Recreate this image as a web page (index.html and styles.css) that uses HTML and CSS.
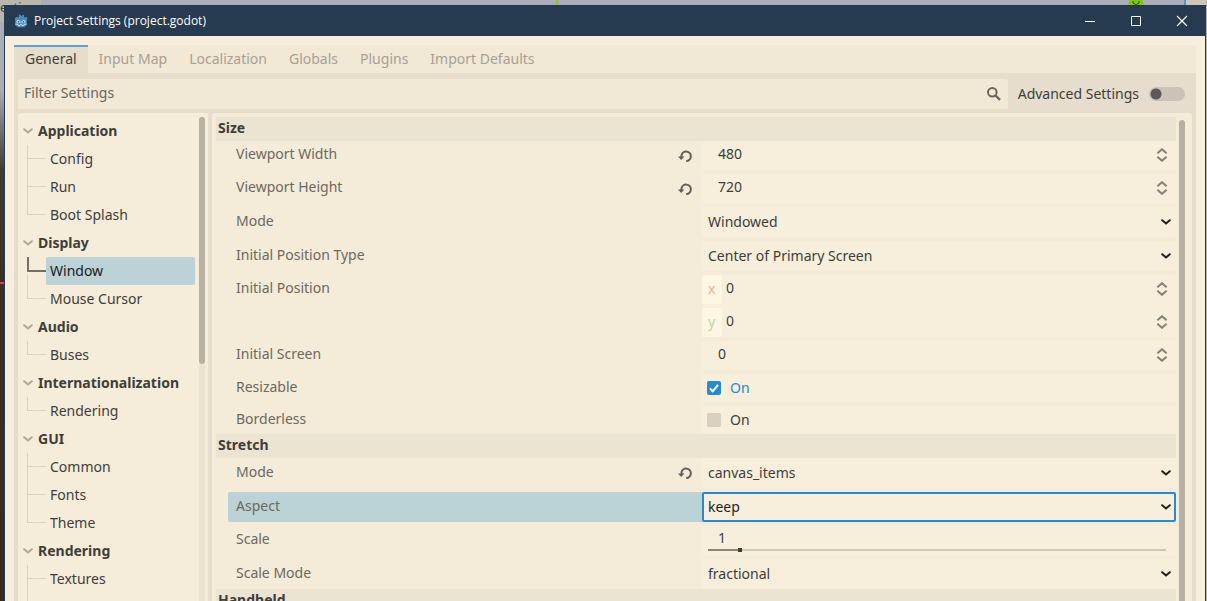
FILE: index.html
```html
<!DOCTYPE html>
<html lang="en">
<head>
<meta charset="utf-8">
<title>Project Settings (project.godot)</title>
<link rel="stylesheet" href="styles.css">
</head>
<body>
<svg class="defs" aria-hidden="true">
  <symbol id="i-down" viewBox="0 0 10 6"><path d="M1.200 1.200L5 4.500l3.800-3.300" fill="none" stroke="currentColor" stroke-width="2" stroke-linecap="round"/></symbol>
  <symbol id="i-updown" viewBox="0 0 12 14"><path d="M1.400 5.200L6 1.200l4.600 4M1.400 8.800l4.600 4 4.600-4" fill="none" stroke="currentColor" stroke-width="2"/></symbol>
  <symbol id="i-reset" viewBox="0 0 16 16"><path d="M4.500 9V7.500a4.700 4.700 0 1 1 4.700 5.500" fill="none" stroke="currentColor" stroke-width="2"/><path d="M1 8.400h6.400L4.200 12z" fill="currentColor"/></symbol>
</svg>

<div class="backdrop" aria-hidden="true">
  <span class="back-label">ection</span>
  <i class="back-line"></i>
  <svg class="back-dot" viewBox="0 0 16 8"><path d="M0 8a8 8 0 0 1 16 0z" fill="#7fc700"/><path d="M5 3v2l3 2 3-2V3" fill="none" stroke="#2f4a10"/></svg>
  <i class="back-edge"></i>
  <i class="back-side"></i>
</div>

<div class="window">
  <header class="titlebar">
    <svg class="logo" viewBox="0 0 16 16" aria-hidden="true">
      <path d="M1 5.200L2.800 3l1.900 1L5.600 3.400l-.3-2L7.200.6l1 2h.6L9.800.6l1.800.8-.2 2 .9.600 1.700-1L15.500 5.200 14.700 6.500v4.500c0 3-2.800 4.200-6.700 4.200S1.300 14 1.300 11V6.500z" fill="#478cbf"/>
      <circle cx="4.700" cy="8.800" r="1.900" fill="#dfeaf3"/><circle cx="11.300" cy="8.800" r="1.900" fill="#dfeaf3"/>
      <circle cx="4.900" cy="8.900" r="1" fill="#414e5c"/><circle cx="11.100" cy="8.900" r="1" fill="#414e5c"/>
      <path d="M8 8v2.500M1.500 11.500l3 .4.3 1.300h2l.2-1h2l.2 1h2l.3-1.300 3-.4" fill="none" stroke="#dfeaf3" stroke-width=".9"/>
    </svg>
    <h1 class="title">Project Settings (project.godot)</h1>
    <button class="win-btn" type="button" aria-label="Minimize"><svg viewBox="0 0 12 12"><path d="M1 6.500h10" stroke="#fff" fill="none"/></svg></button>
    <button class="win-btn" type="button" aria-label="Maximize"><svg viewBox="0 0 12 12"><path d="M1.500 1.500h9v9h-9z" stroke="#fff" fill="none"/></svg></button>
    <button class="win-btn" type="button" aria-label="Close"><svg viewBox="0 0 12 12"><path d="M1 1l10 10M11 1L1 11" stroke="#fff" stroke-width="1.200" fill="none"/></svg></button>
  </header>

  <main class="dialog">
    <nav class="tabs" role="tablist">
      <button class="tab active" type="button" role="tab" aria-selected="true">General</button>
      <button class="tab" type="button" role="tab">Input Map</button>
      <button class="tab" type="button" role="tab">Localization</button>
      <button class="tab" type="button" role="tab">Globals</button>
      <button class="tab" type="button" role="tab">Plugins</button>
      <button class="tab" type="button" role="tab">Import Defaults</button>
    </nav>

    <div class="panel">
      <div class="toolbar">
        <div class="search">
          <input class="search-input" type="text" placeholder="Filter Settings" aria-label="Filter Settings">
          <svg class="search-icon" viewBox="0 0 16 16" aria-hidden="true"><circle cx="6.300" cy="6.300" r="4.300" fill="none" stroke="currentColor" stroke-width="2"/><path d="M9.500 9.500l4.500 4.300" stroke="currentColor" stroke-width="2.400" fill="none"/></svg>
        </div>
        <label class="advanced"><span>Advanced Settings</span><input class="toggle" type="checkbox"></label>
      </div>

      <div class="columns">
        <aside class="tree">
          <div class="tree-list">
            <button class="group" type="button"><svg class="fold"><use href="#i-down"/></svg>Application</button>
            <ul class="branch"><li><button class="leaf" type="button">Config</button></li><li><button class="leaf" type="button">Run</button></li><li><button class="leaf" type="button">Boot Splash</button></li></ul>
            <button class="group" type="button"><svg class="fold"><use href="#i-down"/></svg>Display</button>
            <ul class="branch"><li class="current"><button class="leaf" type="button">Window</button></li><li><button class="leaf" type="button">Mouse Cursor</button></li></ul>
            <button class="group" type="button"><svg class="fold"><use href="#i-down"/></svg>Audio</button>
            <ul class="branch"><li><button class="leaf" type="button">Buses</button></li></ul>
            <button class="group" type="button"><svg class="fold"><use href="#i-down"/></svg>Internationalization</button>
            <ul class="branch"><li><button class="leaf" type="button">Rendering</button></li></ul>
            <button class="group" type="button"><svg class="fold"><use href="#i-down"/></svg>GUI</button>
            <ul class="branch"><li><button class="leaf" type="button">Common</button></li><li><button class="leaf" type="button">Fonts</button></li><li><button class="leaf" type="button">Theme</button></li></ul>
            <button class="group" type="button"><svg class="fold"><use href="#i-down"/></svg>Rendering</button>
            <ul class="branch more"><li><button class="leaf" type="button">Textures</button></li></ul>
          </div>
          <div class="scroll"><div class="thumb thumb-short"></div></div>
        </aside>

        <section class="inspector">
          <form class="props">
            <h2 class="section">Size</h2>
            <div class="rows">
              <div class="row">
                <label class="name" for="vw">Viewport Width</label>
                <button class="reset" type="button" aria-label="Reset Viewport Width"><svg><use href="#i-reset"/></svg></button>
                <div class="value spin"><input class="number" id="vw" type="text" value="480"><svg class="updown"><use href="#i-updown"/></svg></div>
              </div>
              <div class="row">
                <label class="name" for="vh">Viewport Height</label>
                <button class="reset" type="button" aria-label="Reset Viewport Height"><svg><use href="#i-reset"/></svg></button>
                <div class="value spin"><input class="number" id="vh" type="text" value="720"><svg class="updown"><use href="#i-updown"/></svg></div>
              </div>
              <div class="row choice">
                <label class="name" for="wm">Mode</label>
                <div class="value pick"><select class="select" id="wm"><option>Windowed</option></select><svg class="arrow"><use href="#i-down"/></svg></div>
              </div>
              <div class="row choice">
                <label class="name" for="ipt">Initial Position Type</label>
                <div class="value pick"><select class="select" id="ipt"><option>Center of Primary Screen</option></select><svg class="arrow"><use href="#i-down"/></svg></div>
              </div>
              <div class="row">
                <label class="name" for="px">Initial Position</label>
                <div class="value vector">
                  <div class="spin axis"><label class="axis-x" for="px">x</label><input class="number" id="px" type="text" value="0"><svg class="updown"><use href="#i-updown"/></svg></div>
                  <div class="spin axis"><label class="axis-y" for="py">y</label><input class="number" id="py" type="text" value="0"><svg class="updown"><use href="#i-updown"/></svg></div>
                </div>
              </div>
              <div class="row">
                <label class="name" for="scr">Initial Screen</label>
                <div class="value spin"><input class="number" id="scr" type="text" value="0"><svg class="updown"><use href="#i-updown"/></svg></div>
              </div>
              <div class="row">
                <label class="name" for="rs">Resizable</label>
                <div class="value check"><input class="box" id="rs" type="checkbox" checked><svg class="tick" viewBox="0 0 14 14"><path d="M3 7.500l2.700 2.700L11 4" fill="none" stroke="#fff" stroke-width="2"/></svg><label class="on" for="rs">On</label></div>
              </div>
              <div class="row">
                <label class="name" for="bl">Borderless</label>
                <div class="value check"><input class="box" id="bl" type="checkbox"><label class="on" for="bl">On</label></div>
              </div>
            </div>

            <h2 class="section">Stretch</h2>
            <div class="rows">
              <div class="row choice">
                <label class="name" for="sm">Mode</label>
                <button class="reset" type="button" aria-label="Reset Mode"><svg><use href="#i-reset"/></svg></button>
                <div class="value pick"><select class="select" id="sm"><option>canvas_items</option></select><svg class="arrow"><use href="#i-down"/></svg></div>
              </div>
              <div class="row choice selected">
                <label class="name" for="as">Aspect</label>
                <div class="value pick"><select class="select" id="as"><option>keep</option></select><svg class="arrow"><use href="#i-down"/></svg></div>
              </div>
              <div class="row">
                <label class="name" for="sc">Scale</label>
                <div class="value slide"><input class="number" id="sc" type="text" value="1"><input class="slider" type="range" min="0.5" max="8" step="0.01" value="1" aria-label="Scale"></div>
              </div>
              <div class="row choice">
                <label class="name" for="scm">Scale Mode</label>
                <div class="value pick"><select class="select" id="scm"><option>fractional</option></select><svg class="arrow"><use href="#i-down"/></svg></div>
              </div>
            </div>

            <h2 class="section">Handheld</h2>
          </form>
          <div class="scroll"><div class="thumb"></div></div>
        </section>
      </div>
    </div>
  </main>
</div>
</body>
</html>
```

FILE: styles.css
```css
* { box-sizing: border-box; }

html, body { height: 100%; margin: 0; overflow: hidden; }

body {
  position: relative;
  display: flex;
  padding: 5px 1px 0 4px;
  background: #a9adb8;
  font: 14px/20px "Noto Sans", "Open Sans", sans-serif;
  color: #403e39;
}

button, input, select {
  margin: 0;
  padding: 0;
  border: 0;
  border-radius: 0;
  background: none;
  font: inherit;
  color: inherit;
  outline: none;
}

.defs { position: absolute; width: 0; height: 0; }

/* desktop visible around the window */
.backdrop {
  position: absolute;
  inset: 0;
  background:
    linear-gradient(#e0395c, #e0395c) 0 282px / 4px 2px no-repeat,
    linear-gradient(#a9adb8 0 90px, #77787c 125px, #3f3a35 170px, #3a3028 280px, #352b23);
}
.backdrop i { position: absolute; }
.back-label {
  position: absolute;
  top: 0;
  left: 0;
  width: 41px;
  height: 22px;
  background: #b9b6ae;
  font-size: 13px;
  line-height: 14px;
}
.back-line { left: 556px; top: 0; width: 2px; height: 5px; background: #8fd000; }
.back-dot { position: absolute; right: 63px; top: -2px; width: 16px; height: 8px; }
.back-edge { right: 0; top: 0; width: 23px; height: 5px; border-left: 2px solid #5f93bb; background: #cfc8b8; }
.back-side { right: 0; top: 0; width: 1px; height: 100%; background: #b5b1a4; }

.window {
  position: relative;
  flex: 1;
  min-width: 0;
  display: flex;
  flex-direction: column;
  border: solid #263b50;
  border-width: 0 1px;
  background: #f7eedb;
}

.titlebar {
  display: flex;
  align-items: center;
  height: 31px;
  padding-left: 9px;
  background: #263b50;
  color: #fff;
}
.logo { width: 14px; height: 14px; }
.title { flex: 1; margin: 0 0 0 6px; font-family: "Open Sans", "Noto Sans", sans-serif; font-size: 12px; font-weight: 400; line-height: 16px; }
.win-btn { display: flex; align-items: center; justify-content: center; width: 46px; height: 31px; }
.win-btn svg { width: 12px; height: 12px; }

.dialog {
  flex: 1;
  min-height: 0;
  display: flex;
  flex-direction: column;
  padding: 9px 9px 0 9px;
}

.tabs { display: flex; height: 28px; border-radius: 3px 3px 0 0; background: #f1e8d6; }
.tab { padding: 0 11px; color: #a8a193; }
.tab.active { padding-bottom: 2px; border-top: 2px solid #58a3d3; background: #e6ddcd; color: #403e39; }

.panel {
  flex: 1;
  min-height: 0;
  display: flex;
  flex-direction: column;
  gap: 4px;
  padding: 6px 4px 0;
  background: #e6ddcd;
}

.toolbar { display: flex; gap: 10px; }
.search { flex: 1; display: flex; align-items: center; height: 30px; padding: 0 6px; border-radius: 3px 3px 0 0; background: #f1e8d6; }
.search-input { flex: 1; min-width: 0; height: 26px; margin-bottom: 4px; }
.search-input::placeholder { color: #6b675e; opacity: 1; }
.search-icon { width: 16px; height: 16px; color: #69665f; }
.advanced { display: flex; align-items: center; gap: 10px; padding-right: 7px; }
.toggle {
  appearance: none;
  width: 36px;
  height: 14px;
  border-radius: 7px;
  background: radial-gradient(circle at 7px 7px, #5b5a58 5px, transparent 6px) #cbc3b8;
}

.columns { flex: 1; min-height: 0; display: flex; gap: 4px; }

.tree {
  display: flex;
  width: 190px;
  padding: 4px 3px 0 4px;
  overflow: hidden;
  border-radius: 3px 3px 0 0;
  background: #f5ecd9;
}
.tree-list { flex: 1; }
.group, .leaf { display: flex; align-items: center; width: 100%; height: 28px; text-align: left; }
.group { gap: 5px; padding-left: 1px; font-weight: 700; }
.fold { width: 10px; height: 6px; color: #aea798; }
.branch { margin: 0; padding: 0 0 0 5px; list-style: none; }
.branch li {
  padding: 0 4px 0 19px;
  background:
    linear-gradient(#dbd3c0, #dbd3c0) 0 13px / 19px 1px no-repeat,
    linear-gradient(#dbd3c0, #dbd3c0) 0 0 / 1px 100% no-repeat;
}
.branch:not(.more) li:last-child {
  background:
    linear-gradient(#dbd3c0, #dbd3c0) 0 13px / 19px 1px no-repeat,
    linear-gradient(#dbd3c0, #dbd3c0) 0 0 / 1px 13px no-repeat;
}
.more li { padding-bottom: 28px; }
.branch li.current {
  background:
    linear-gradient(#726e66, #726e66) 0 13px / 19px 2px no-repeat,
    linear-gradient(#726e66, #726e66) 0 0 / 2px 15px no-repeat,
    linear-gradient(#dbd3c0, #dbd3c0) 0 100% / 1px 11px no-repeat;
}
.leaf { padding-left: 4px; border-radius: 2px; }
.current .leaf { background: #bbd2d7; color: #1a1a19; }

.scroll { width: 6px; border-radius: 3px 3px 0 0; background: #ece3d1; }
.thumb { height: 100%; border-radius: 3px 3px 0 0; background: #b7b1a4; }
.thumb-short { height: 247px; border-radius: 3px; }

.inspector {
  flex: 1;
  min-width: 0;
  display: flex;
  gap: 3px;
  padding: 4px 7px 0 4px;
  overflow: hidden;
  border-radius: 3px 3px 0 0;
  background: #f4ebd8;
}
.inspector .scroll { margin-top: 3px; }
.props { flex: 1; min-width: 0; }
.section { margin: 0; padding: 0 2px; background: #ebe4d2; font-size: 14px; font-weight: 700; line-height: 22px; height: 24px; }
.rows { display: flex; flex-direction: column; gap: 4px; padding-left: 12px; }
.row { display: flex; border-radius: 2px; }
.name { flex: 1; padding: 3px 8px; color: #6d6960; }
.choice .name { padding-top: 4px; }
.row.selected { background: #bbd2d7; }
.reset { align-self: center; width: 16px; height: 16px; margin-right: 9px; color: #625f5b; }
.reset svg { display: block; width: 16px; height: 16px; }

.value { flex: 0 0 50%; min-width: 0; border-radius: 2px; background: #f7eedb; }
.spin { display: flex; align-items: center; height: 29px; padding: 0 8px 0 16px; }
.number { flex: 1; min-width: 0; width: 100%; height: 20px; margin-bottom: 4px; }
.updown { width: 12px; height: 14px; margin-bottom: 2px; color: #86827a; }
.pick { display: grid; align-items: center; height: 30px; }
.select { grid-area: 1 / 1; width: 100%; height: 30px; padding: 0 24px 0 6px; appearance: none; border-radius: 2px; }
.arrow { grid-area: 1 / 1; justify-self: end; width: 10px; height: 6px; margin-right: 5px; color: #1f1e1c; pointer-events: none; }
.selected .select { padding-left: 4px; border: 2px solid #268bd2; color: #1f1e1c; }
.vector { display: flex; flex-direction: column; gap: 4px; }
.axis { gap: 4px; padding-left: 0; }
.axis-x, .axis-y { width: 20px; height: 29px; padding-left: 6px; border-radius: 2px; background: #fff5e2; line-height: 28px; }
.axis-x { color: #e8b29b; }
.axis-y { color: #a5e3ae; }

.check { display: grid; grid-template-columns: 14px 1fr; gap: 9px; align-items: center; height: 28px; padding-left: 5px; }
.box { grid-area: 1 / 1; appearance: none; width: 14px; height: 14px; border-radius: 2px; background: #d9d1c0; }
.box:checked { background: #268bd2; }
.tick { grid-area: 1 / 1; width: 14px; height: 14px; pointer-events: none; }
.on { grid-area: 1 / 2; }
.box:checked ~ .on { color: #268bd2; }

.slide { display: flex; flex-direction: column; height: 29px; padding: 2px 10px 0 6px; }
.slide .number { flex: none; margin: 0; padding-left: 10px; }
.slider {
  appearance: none;
  width: 100%;
  height: 4px;
  background: linear-gradient(90deg, #8b867b 7%, #cfc7b8 7%) 0 1px / 100% 2px no-repeat;
}
.slider::-webkit-slider-thumb { appearance: none; width: 4px; height: 4px; background: #403e39; }
```
